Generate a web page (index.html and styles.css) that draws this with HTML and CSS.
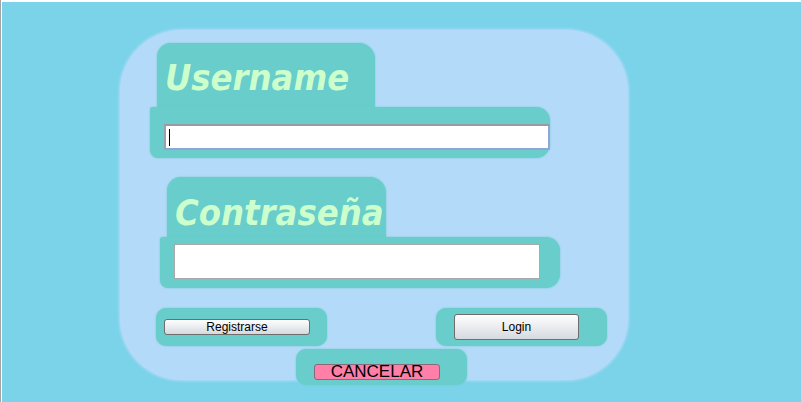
FILE: index.html
```html
<!DOCTYPE html>
<html lang="es">
<head>
<meta charset="utf-8">
<title>Login</title>
<link rel="stylesheet" href="styles.css">
</head>
<body>
<div class="topstrip"><span class="toptext">and then the sessions in the screen.</span></div>
<div class="frame">
  <div class="panel">
    <div class="group group-user">
      <div class="tab tab-user"><span class="label">Username</span></div>
      <div class="field field-user">
        <div class="input input-user"><span class="caret"></span></div>
      </div>
    </div>
    <div class="group group-pass">
      <div class="tab tab-pass"><span class="label">Contraseña</span></div>
      <div class="field field-pass">
        <div class="input input-pass"></div>
      </div>
    </div>
    <div class="btnrow">
      <div class="btnbox box-reg"><button class="btn btn-reg">Registrarse</button></div>
      <div class="btnbox box-login"><button class="btn btn-login">Login</button></div>
    </div>
    <div class="btnbox box-cancel"><button class="btn btn-cancel">CANCELAR</button></div>
  </div>
</div>
</body>
</html>
```
FILE: styles.css
```css
html, body {
  margin: 0;
  padding: 0;
  background: #ffffff;
  overflow: hidden;
}
body {
  width: 801px;
  height: 402px;
  border-left: 1px solid #a4a4a4;
  box-sizing: border-box;
  padding-left: 1px;
}
.topstrip {
  height: 2px;
  overflow: hidden;
  position: relative;
}
.toptext {
  display: block;
  margin-top: -11px;
  margin-left: 64px;
  font-family: "Liberation Mono", monospace;
  font-size: 13px;
  line-height: 13px;
  color: #9a9a9a;
  letter-spacing: 1px;
}
.frame {
  height: 400px;
  background: #7ad3e9;
  padding-top: 28px;
  box-sizing: border-box;
}
.panel {
  margin-left: 118px;
  width: 508px;
  height: 350px;
  background: #b3daf9;
  border-radius: 62px;
  box-shadow: 0 0 3px 1px #b3daf9;
  box-sizing: border-box;
  padding-top: 13px;
  display: flex;
  flex-direction: column;
  align-items: flex-start;
}
.panel > * { flex-shrink: 0; }
.group {
  display: flex;
  flex-direction: column;
  align-items: flex-start;
}
.group-user { margin-left: 30px; }
.group-pass { margin-left: 40px; margin-top: 19px; }
.tab {
  background: #68cdcb;
  border-radius: 14px 16px 0 0;
  box-shadow: 0 0 2px #68cdcb;
  margin-left: 7px;
  box-sizing: border-box;
}
.tab-user { width: 218px; height: 64px; padding: 14px 0 0 8px; }
.tab-pass { width: 219px; height: 60px; padding: 15px 0 0 8px; }
.label {
  display: block;
  font-family: "DejaVu Sans", sans-serif;
  font-stretch: condensed;
  font-weight: bold;
  font-style: italic;
  font-size: 36px;
  line-height: 42px;
  color: #ccffcc;
}
.field {
  width: 400px;
  height: 51px;
  background: #68cdcb;
  border-radius: 3px 14px 14px 8px;
  box-shadow: 0 0 2px #68cdcb;
  box-sizing: border-box;
}
.field-user { padding: 17px 0 0 14px; }
.field-pass { padding: 7px 0 0 14px; }
.input {
  background: #ffffff;
  box-sizing: border-box;
  position: relative;
}
.input-user {
  width: 386px;
  height: 26px;
  border: 2px solid #8fa6d6;
  border-top-color: #9a9aa6;
  border-left-color: #9aa0b0;
}
.input-pass {
  width: 366px;
  height: 35px;
  border: 1px solid #a9a9a9;
}
.caret {
  position: absolute;
  left: 3px;
  top: 3px;
  width: 1px;
  height: 17px;
  background: #000000;
}
.btnrow {
  display: flex;
  margin-top: 20px;
  margin-left: 36px;
  gap: 109px;
}
.btnbox {
  width: 171px;
  background: #68cdcb;
  border-radius: 10px;
  box-shadow: 0 0 2px #68cdcb;
  box-sizing: border-box;
}
.box-reg { height: 38px; padding: 11px 0 0 8px; }
.box-login { height: 38px; padding: 6px 0 0 18px; }
.box-cancel { height: 36px; padding: 15px 0 0 18px; margin-left: 176px; margin-top: 3px; }
.btn {
  display: block;
  margin: 0;
  padding: 0;
  font-family: "Liberation Sans", Arial, sans-serif;
  color: #000000;
  border: 1px solid #6e6e6e;
  border-radius: 3px;
  background: linear-gradient(#fefefe 0%, #eceef1 45%, #d6d9df 100%);
  box-sizing: border-box;
  text-align: center;
}
.btn-reg { width: 146px; height: 16px; font-size: 12px; line-height: 14px; }
.btn-login { width: 125px; height: 26px; font-size: 12px; line-height: 24px; }
.btn-cancel {
  width: 126px;
  height: 16px;
  font-size: 17px;
  line-height: 14px;
  background: #ff7fa8;
  border-color: #8a6a78;
  overflow: visible;
}
```
